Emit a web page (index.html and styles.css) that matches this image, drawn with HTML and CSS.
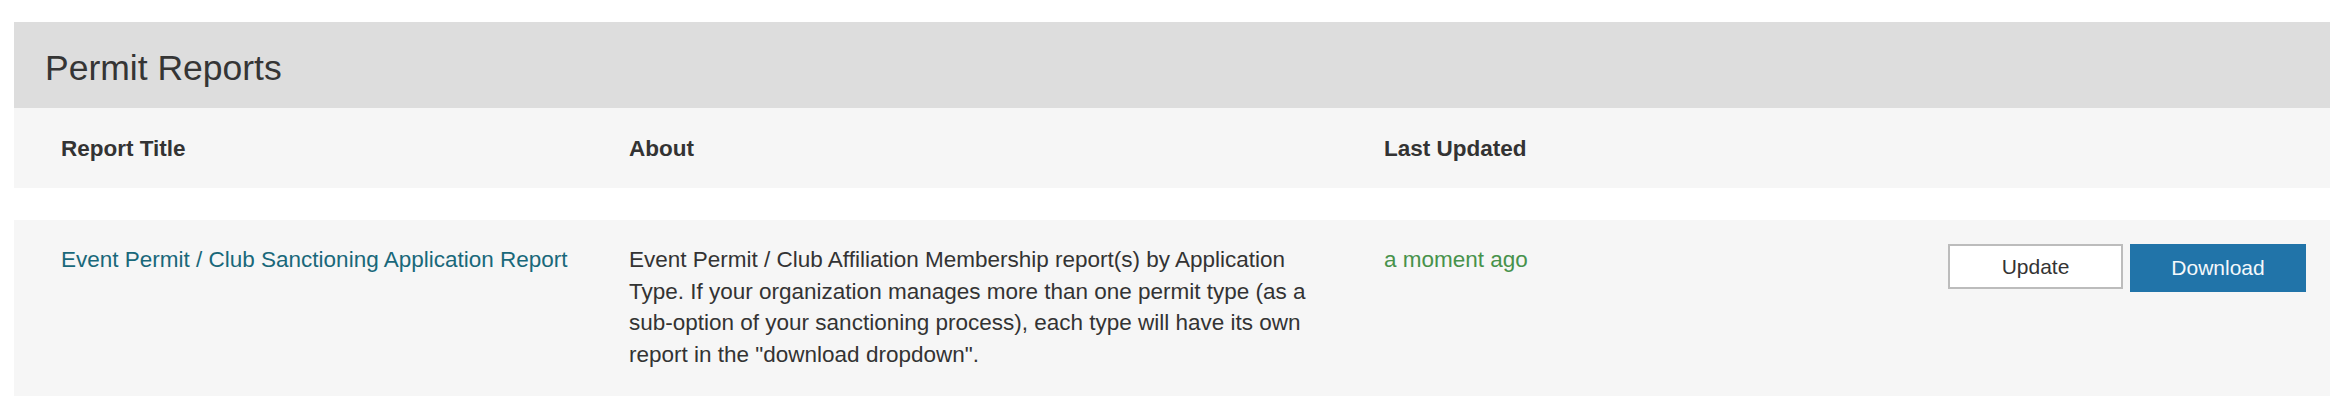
FILE: index.html
```html
<!DOCTYPE html>
<html lang="en">
<head>
<meta charset="utf-8">
<title>Permit Reports</title>
<link rel="stylesheet" href="styles.css">
</head>
<body>
<section class="panel">
  <header class="panel-head">
    <h1 class="panel-title">Permit Reports</h1>
  </header>
  <div class="row row-head">
    <div class="cell">Report Title</div>
    <div class="cell">About</div>
    <div class="cell">Last Updated</div>
  </div>
  <div class="row row-data">
    <div class="cell"><a class="report-link" href="#">Event Permit / Club Sanctioning Application Report</a></div>
    <div class="cell cell-about">Event Permit / Club Affiliation Membership report(s) by Application Type. If your organization manages more than one permit type (as a sub-option of your sanctioning process), each type will have its own report in the "download dropdown".</div>
    <div class="cell cell-updated">a moment ago</div>
    <div class="cell cell-actions">
      <button class="btn btn-update" type="button">Update</button>
      <button class="btn btn-download" type="button">Download</button>
    </div>
  </div>
</section>
</body>
</html>
```

FILE: styles.css
```css
* { box-sizing: border-box; }

body {
  margin: 0;
  background: #ffffff;
  font-family: "Liberation Sans", Arial, Helvetica, sans-serif;
  color: #333333;
}

.panel {
  margin: 22px 8px 0 14px;
}

.panel-head {
  height: 86px;
  background: #dddddd;
  display: flex;
  align-items: center;
  padding: 6px 31px 0;
}

.panel-title {
  margin: 0;
  font-size: 35.5px;
  font-weight: normal;
  color: #353535;
  line-height: normal;
}

.row {
  display: grid;
  grid-template-columns: 568px 755px 1fr auto;
  align-items: start;
  padding: 0 24px 0 47px;
  background: #f6f6f6;
  font-size: 22.5px;
  line-height: 31.7px;
}

.row-head {
  height: 80px;
  align-items: center;
  padding-top: 1px;
  font-weight: bold;
  color: #333333;
  margin-bottom: 32px;
}

.row-data {
  padding-top: 24px;
  padding-bottom: 25px;
}

.report-link {
  color: #19687a;
  text-decoration: none;
}

.cell-about {
  padding-right: 40px;
  color: #333333;
}

.cell-updated {
  color: #47924b;
}

.cell-actions {
  display: flex;
  gap: 7px;
  align-items: flex-start;
}

.btn {
  font-family: "Liberation Sans", Arial, Helvetica, sans-serif;
  font-size: 21px;
  margin: 0;
  border-radius: 0;
  cursor: pointer;
}

.btn-update {
  width: 175px;
  height: 45px;
  background: #ffffff;
  border: 2px solid #bcbcbc;
  color: #333333;
}

.btn-download {
  width: 176px;
  height: 48px;
  background: #2174a9;
  border: none;
  color: #f4f8fb;
}
```
